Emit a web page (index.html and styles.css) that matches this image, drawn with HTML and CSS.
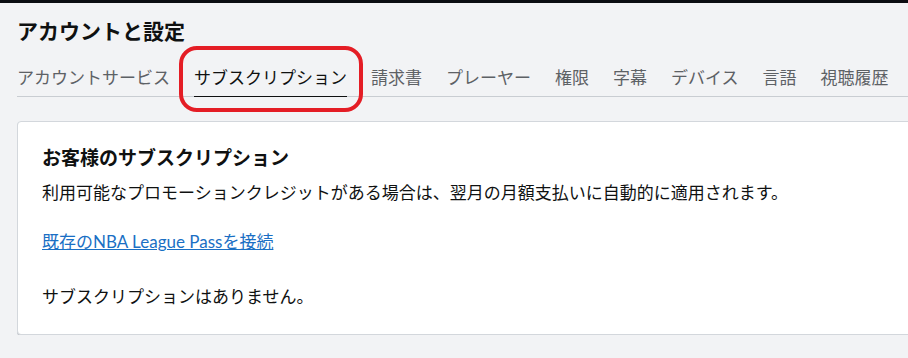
FILE: index.html
```html
<!DOCTYPE html>
<html lang="ja">
<head>
    <meta charset="UTF-8">
    <meta name="viewport" content="width=device-width, initial-scale=1.0">
    <title>アカウントと設定</title>
    <link rel="stylesheet" href="styles.css">
</head>
<body>

    <div class="top-bar"></div>

    <main class="page">
        <h1 class="page-title">アカウントと設定</h1>

        <nav class="tabs">
            <a class="tab" href="#">アカウントサービス</a>
            <a class="tab active" href="#">サブスクリプション<span class="mark"></span></a>
            <a class="tab" href="#">請求書</a>
            <a class="tab" href="#">プレーヤー</a>
            <a class="tab" href="#">権限</a>
            <a class="tab" href="#">字幕</a>
            <a class="tab" href="#">デバイス</a>
            <a class="tab" href="#">言語</a>
            <a class="tab" href="#">視聴履歴</a>
        </nav>

        <section class="card">
            <h2 class="card-title">お客様のサブスクリプション</h2>
            <p class="note">利用可能なプロモーションクレジットがある場合は、翌月の月額支払いに自動的に適用されます。</p>
            <p class="link-row"><a href="#">既存のNBA League Passを接続</a></p>
            <p class="empty">サブスクリプションはありません。</p>
        </section>
    </main>

</body>
</html>
```

FILE: styles.css
```css
html, body {
    margin: 0;
    overflow: hidden;
}
body {
    background: #f2f3f5;
    color: #0f1111;
    font-family: "Noto Sans", "Noto Sans CJK JP", sans-serif;
}
.top-bar {
    height: 3px;
    background: #0b0d12;
}
.page {
    padding-left: 17px;
}
.page-title {
    margin: 14px 0 0;
    font-size: 21px;
    line-height: 28px;
    font-weight: bold;
}

/* タブ */
.tabs {
    display: flex;
    gap: 24px;
    margin-top: 21px;
    border-bottom: 1px solid #c9cdd2;
    white-space: nowrap;
}
.tab {
    position: relative;
    color: #5d6165;
    text-decoration: none;
    font-size: 17px;
    line-height: 24px;
    padding-bottom: 6px;
    border-bottom: 1px solid transparent;
    margin-bottom: -1px;
}
.tab.active {
    color: #0f1111;
    border-bottom-color: #0f1111;
}
.mark {
    position: absolute;
    left: -15px;
    top: -20px;
    width: 176px;
    height: 58px;
    border: 4px solid #e41d25;
    border-radius: 18px;
}

/* カード */
.card {
    margin: 24px -30px 0 0;
    padding: 23px 24px 24px;
    background: #fff;
    border: 1px solid #d3d7dc;
    border-radius: 4px;
    box-shadow: 0 1px 0 #c3c7cd;
}
.card-title {
    margin: 0;
    font-size: 19px;
    line-height: 26px;
    font-weight: bold;
}
.card p {
    margin: 0;
    font-size: 17px;
    line-height: 26px;
}
.note { margin-top: 9px !important; }
.link-row { margin-top: 23px !important; }
.link-row a {
    color: #1a6fc4;
    font-family: "Lato", "Noto Sans CJK JP", sans-serif;
}
.empty { margin-top: 29px !important; }
```
